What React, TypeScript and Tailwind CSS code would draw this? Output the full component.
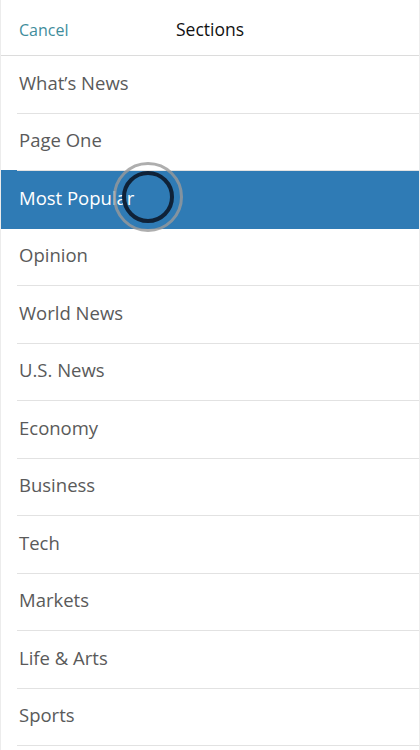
const sections = [
  "What’s News",
  "Page One",
  "Most Popular",
  "Opinion",
  "World News",
  "U.S. News",
  "Economy",
  "Business",
  "Tech",
  "Markets",
  "Life & Arts",
  "Sports",
];

export default function App() {
  const active = "Most Popular";
  return (
    <div className="relative h-[750px] w-[420px] overflow-hidden border-x border-[#ececec] bg-white font-['Open_Sans',sans-serif]">
      <div className="grid h-[56px] grid-cols-[1fr_auto_1fr] items-center border-b border-[#dcdcdc] px-[18px] pt-[4px]">
        <span className="text-[16px] text-[#3f8d9c]">Cancel</span>
        <span className="text-[17.5px] font-medium text-[#111]">Sections</span>
        <span />
      </div>
      <ul>
        {sections.map((s) => (
          <li
            key={s}
            className={
              s === active
                ? "-mt-px flex h-[58.5px] items-center bg-[#2f7bb5] pl-[18px] text-[18.5px] text-white"
                : "flex h-[57.5px] items-center pl-[16px] text-[18.5px] text-[#5a5a5a]"
            }
          >
            <div
              className={
                s === active
                  ? "flex h-full flex-1 items-center"
                  : "flex h-full flex-1 items-center border-b border-[#e2e2e2] pl-[2px]"
              }
            >
              <span className="-mt-[3px]">{s}</span>
            </div>
          </li>
        ))}
      </ul>
      {/* touch indicator */}
      <div className="pointer-events-none absolute left-[112px] top-[162px] h-[70px] w-[70px] rounded-full border-[3px] border-[#9a9a9a]/80 p-[6px]">
        <div className="h-full w-full rounded-full border-[4px] border-[#0f2238]" />
      </div>
    </div>
  );
}
